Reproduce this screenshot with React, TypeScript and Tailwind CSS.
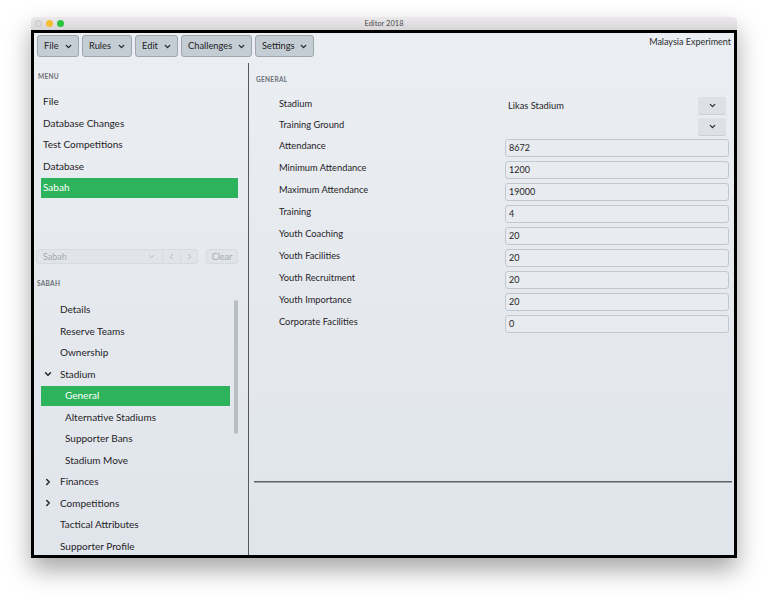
import { ChevronDown, ChevronRight, ChevronLeft } from "lucide-react";

const toolbar = [
  { label: "File", w: "w-[42px]" },
  { label: "Rules", w: "w-[50px]" },
  { label: "Edit", w: "w-[43px]" },
  { label: "Challenges", w: "w-[71px]" },
  { label: "Settings", w: "w-[59px]" },
];

const menu = ["File", "Database Changes", "Test Competitions", "Database", "Sabah"];

type TreeItem = { label: string; level: 1 | 2; chevron?: "down" | "right"; active?: boolean };

const tree: TreeItem[] = [
  { label: "Details", level: 1 },
  { label: "Reserve Teams", level: 1 },
  { label: "Ownership", level: 1 },
  { label: "Stadium", level: 1, chevron: "down" },
  { label: "General", level: 2, active: true },
  { label: "Alternative Stadiums", level: 2 },
  { label: "Supporter Bans", level: 2 },
  { label: "Stadium Move", level: 2 },
  { label: "Finances", level: 1, chevron: "right" },
  { label: "Competitions", level: 1, chevron: "right" },
  { label: "Tactical Attributes", level: 1 },
  { label: "Supporter Profile", level: 1 },
];

const fields: { label: string; value?: string; kind: "select" | "input"; h: string }[] = [
  { label: "Stadium", value: "Likas Stadium", kind: "select", h: "h-[21px]" },
  { label: "Training Ground", value: "", kind: "select", h: "h-[21px]" },
  { label: "Attendance", value: "8672", kind: "input", h: "h-[22px]" },
  { label: "Minimum Attendance", value: "1200", kind: "input", h: "h-[22px]" },
  { label: "Maximum Attendance", value: "19000", kind: "input", h: "h-[22px]" },
  { label: "Training", value: "4", kind: "input", h: "h-[22px]" },
  { label: "Youth Coaching", value: "20", kind: "input", h: "h-[22px]" },
  { label: "Youth Facilities", value: "20", kind: "input", h: "h-[22px]" },
  { label: "Youth Recruitment", value: "20", kind: "input", h: "h-[22px]" },
  { label: "Youth Importance", value: "20", kind: "input", h: "h-[22px]" },
  { label: "Corporate Facilities", value: "0", kind: "input", h: "h-[22px]" },
];

function SectionLabel({ children }: { children: string }) {
  return (
    <div className="h-[10px] leading-[10px] text-[6.5px] font-bold tracking-[0.3px] text-[#6b7075]">
      {children}
    </div>
  );
}

export default function App() {
  return (
    <div
      className="min-h-screen w-full bg-white pt-[17px] pl-[31px]"
      style={{ fontFamily: "Lato, 'Open Sans', sans-serif" }}
    >
      <div className="w-[706px] rounded-t-[4px] shadow-[0_12px_24px_rgba(0,0,0,0.35)]">
        {/* title bar */}
        <div className="relative flex h-[13px] items-center rounded-t-[4px] bg-gradient-to-b from-[#ebe9eb] to-[#d8d6d8] pl-[4px]">
          <div className="flex gap-[4px]">
            <span className="h-[7px] w-[7px] rounded-full border border-[#c4c4c4] bg-[#dcdcdc]" />
            <span className="h-[7px] w-[7px] rounded-full bg-[#f6bd30]" />
            <span className="h-[7px] w-[7px] rounded-full bg-[#2bc53e]" />
          </div>
          <div className="absolute inset-0 flex items-center justify-center text-[7.5px] text-[#4a4a4a]">
            Editor 2018
          </div>
        </div>

        <div className="flex h-[528px] flex-col border-[3px] border-black bg-gradient-to-b from-[#ebeef2] to-[#e0e5eb] text-[#1f2326]">
          {/* top row */}
          <div className="flex h-[30px] shrink-0 items-start justify-between">
            <div className="mt-[2px] flex gap-[3px] pl-[3px]">
              {toolbar.map((b) => (
                <div
                  key={b.label}
                  className={`${b.w} flex h-[22px] items-center justify-between rounded-[3px] border border-[#9ea7af] bg-[#c5cdd4] pl-[6px] pr-[5px] text-[9.3px] text-[#222]`}
                >
                  <span>{b.label}</span>
                  <ChevronDown size={9} strokeWidth={3.4} />
                </div>
              ))}
            </div>
            <div className="pr-[3px] pt-[4px] text-[9px] leading-[10px] text-[#2a2d30]">Malaysia Experiment</div>
          </div>

          {/* body */}
          <div className="flex min-h-0 flex-1">
            {/* sidebar */}
            <div className="flex w-[214px] shrink-0 flex-col overflow-hidden">
              <div className="pl-[4px] pt-[9px]">
                <SectionLabel>MENU</SectionLabel>
              </div>
              <div className="mt-[9px] flex flex-col">
                {menu.map((m) => (
                  <div key={m} className="h-[21.5px] py-[1px] pl-[7px] pr-[10px]">
                    <div
                      className={`flex h-full items-center pl-[2px] text-[10px] ${
                        m === "Sabah" ? "bg-[#2db35b] text-white" : "text-[#1f2326]"
                      }`}
                    >
                      {m}
                    </div>
                  </div>
                ))}
              </div>

              {/* combo row */}
              <div className="mt-[50px] flex h-[19px] items-stretch pl-[2px]">
                <div className="flex w-[162px] items-stretch rounded-[3px] border border-[#d6dbe0] bg-[#e1e5e9] text-[9px] text-[#a3a9af]">
                  <div className="flex w-[126px] items-center justify-between border-r border-[#d6dbe0] pl-[6px] pr-[6px]">
                    <span>Sabah</span>
                    <ChevronDown size={9} strokeWidth={2} className="text-[#a3a9af]" />
                  </div>
                  <div className="flex w-[18px] items-center justify-center border-r border-[#d6dbe0]">
                    <ChevronLeft size={9} strokeWidth={2} />
                  </div>
                  <div className="flex flex-1 items-center justify-center">
                    <ChevronRight size={9} strokeWidth={2} />
                  </div>
                </div>
                <div className="ml-[8px] flex w-[32px] items-center justify-center rounded-[3px] border border-[#d6dbe0] bg-[#e1e5e9] text-[9px] text-[#a3a9af]">
                  Clear
                </div>
              </div>

              <div className="pl-[3px] pt-[15px]">
                <SectionLabel>SABAH</SectionLabel>
              </div>

              {/* tree */}
              <div className="relative mt-[10px] flex-1">
                <div className="flex flex-col">
                  {tree.map((t) => (
                    <div key={t.label} className="h-[21.5px] py-[1px] pl-[7px] pr-[18px]">
                      <div
                        className={`relative flex h-full items-center text-[10px] ${
                          t.level === 1 ? "pl-[19px]" : "pl-[24px]"
                        } ${t.active ? "bg-[#2db35b] text-white" : "text-[#1f2326]"}`}
                      >
                        {t.chevron === "down" && (
                          <ChevronDown size={10} strokeWidth={3.4} className="absolute left-[2px] top-1/2 -translate-y-1/2" />
                        )}
                        {t.chevron === "right" && (
                          <ChevronRight size={10} strokeWidth={3.4} className="absolute left-[2px] top-1/2 -translate-y-1/2" />
                        )}
                        {t.label}
                      </div>
                    </div>
                  ))}
                </div>
                <div className="absolute left-[200px] top-[1px] h-[134px] w-[4px] rounded-full bg-[#b9bec3]" />
              </div>
            </div>

            {/* divider */}
            <div className="w-px shrink-0 bg-[#55595d]" />

            {/* main */}
            <div className="flex min-w-0 flex-1 flex-col">
              <div className="pl-[7px] pt-[12px]">
                <SectionLabel>GENERAL</SectionLabel>
              </div>
              <div className="mt-[11px] flex flex-col pr-[5px]">
                {fields.map((f) => (
                  <div key={f.label} className={`${f.h} flex items-start`}>
                    <div className="w-[256px] shrink-0 pl-[30px] pt-[2px] text-[9.3px] leading-[12px] text-[#1f2326]">
                      {f.label}
                    </div>
                    {f.kind === "select" ? (
                      <div className="mt-[1px] flex flex-1 items-center justify-between">
                        <span className="pl-[3px] text-[9.3px] leading-[17px]">{f.value}</span>
                        <div className="mr-[3px] flex h-[17px] w-[28px] items-center justify-center rounded-[2px] bg-[#dde1e6] shadow-[0_1px_0_rgba(0,0,0,0.12)]">
                          <ChevronDown size={9} strokeWidth={3} className="text-[#222]" />
                        </div>
                      </div>
                    ) : (
                      <div className="mt-[1px] flex h-[18px] flex-1 items-center rounded-[3px] border border-[#c2c8ce] bg-[#e8ecf0] pl-[3px] text-[9px] text-[#1f2326]">
                        {f.value}
                      </div>
                    )}
                  </div>
                ))}
              </div>
              <div className="flex-1" />
              <div className="ml-[5px] mr-[2px] h-[2px] border-t border-[#5d6266] bg-[#9da3a8]" />
              <div className="h-[72px] shrink-0" />
            </div>
          </div>
        </div>
      </div>
    </div>
  );
}
